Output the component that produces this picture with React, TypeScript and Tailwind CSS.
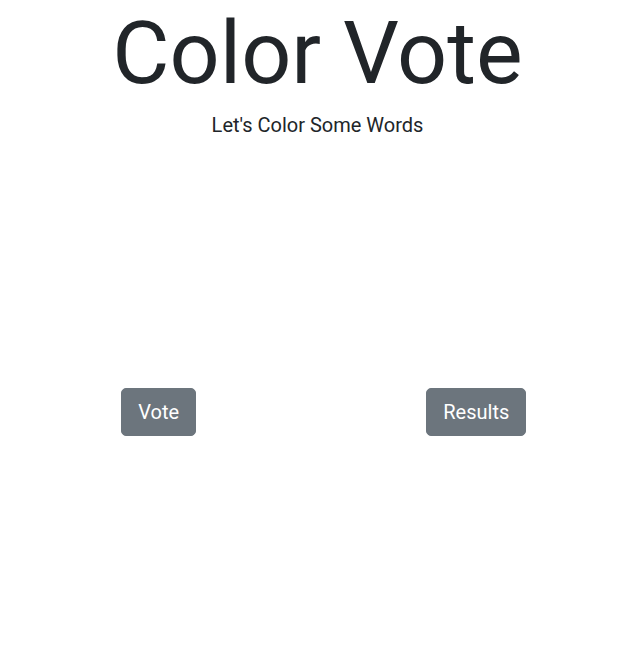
export default function App() {
    return (
        <div className="min-h-screen w-full overflow-hidden bg-white text-[#212529] font-['Roboto',sans-serif]">
            <div className="w-[635px]">

                {/* Header */}
                <div className="text-center">
                    <h1 className="text-[88px] font-normal leading-[1.2] mb-[4px]">Color Vote</h1>
                    <p className="text-[20px] leading-[1.5]">Let's Color Some Words</p>
                </div>

                {/* Actions */}
                <div className="grid grid-cols-2 mt-[248px]">
                    <div className="flex justify-center">
                        <button className="bg-[#6c757d] text-white text-[20px] leading-[1.5] px-4 py-2 rounded-[5px] border border-[#6c757d]">
                            Vote
                        </button>
                    </div>
                    <div className="flex justify-center">
                        <button className="bg-[#6c757d] text-white text-[20px] leading-[1.5] px-4 py-2 rounded-[5px] border border-[#6c757d]">
                            Results
                        </button>
                    </div>
                </div>

            </div>
        </div>
    );
}
